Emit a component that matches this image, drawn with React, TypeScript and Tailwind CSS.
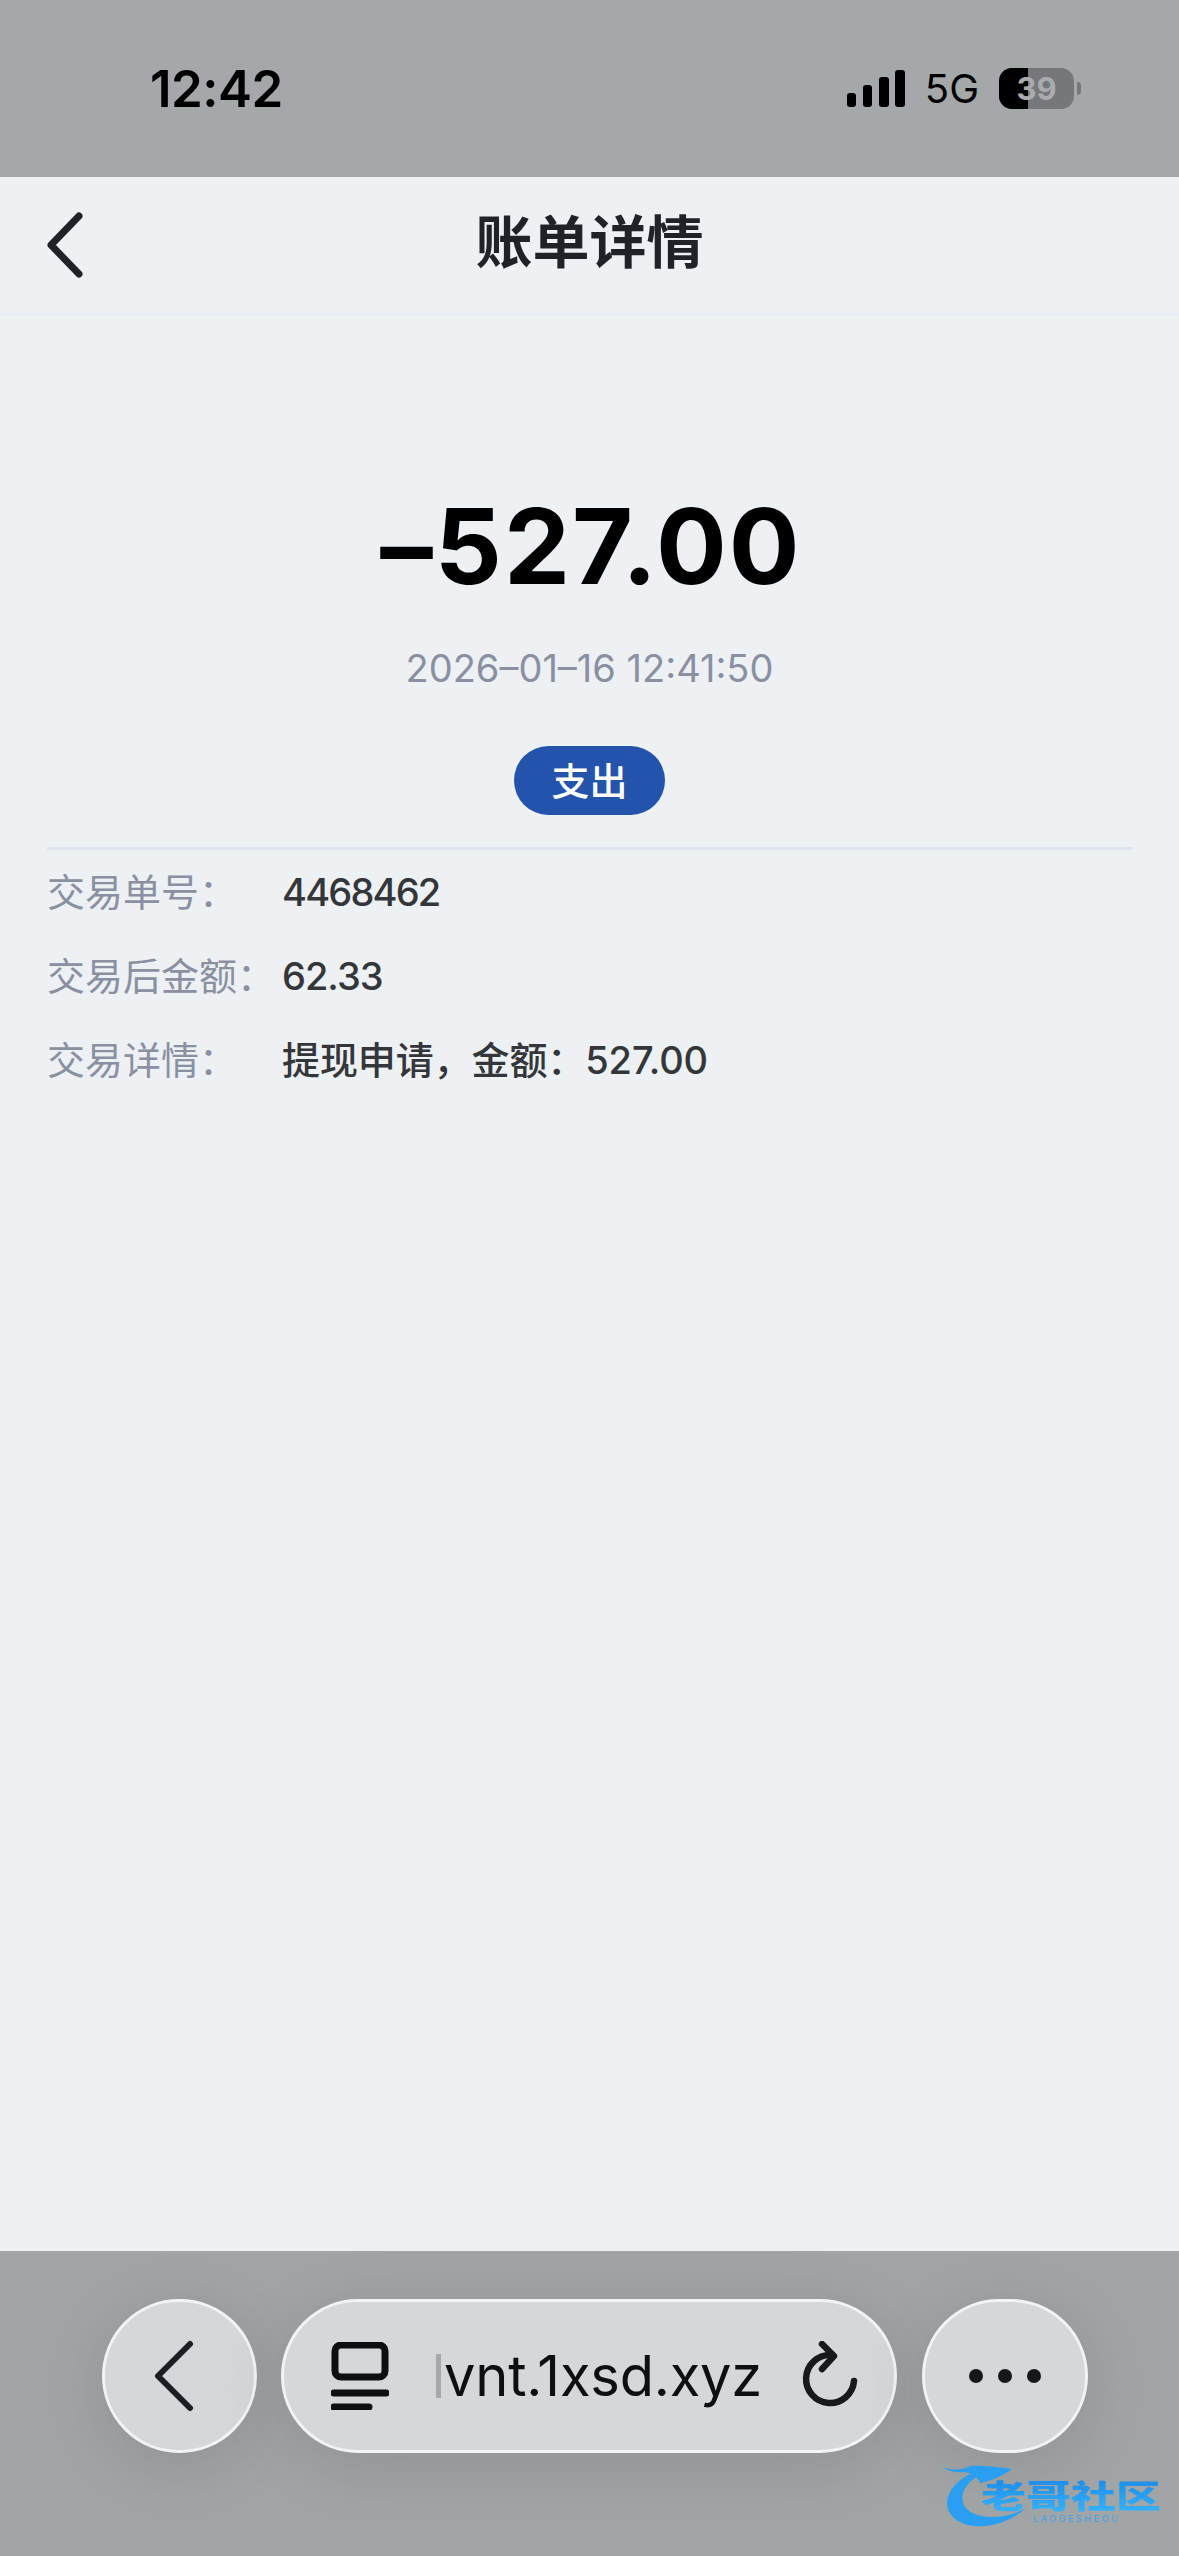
import React from "react";

const FONT = { fontFamily: 'Inter, "Noto Sans CJK SC", sans-serif' };

function Row({ label, value, tracking }: { label: string; value: string; tracking: string }) {
  return (
    <div className="flex h-[48px] items-center text-[38px] leading-[48px]">
      <div className="w-[235px] shrink-0 text-[#8a90a2]">{label}</div>
      <div className={`font-medium text-[#34363a] ${tracking}`}>{value}</div>
    </div>
  );
}

export default function App() {
  return (
    <div className="relative flex h-[2556px] w-[1179px] flex-col overflow-hidden bg-[#edf1f4]" style={FONT}>
      {/* status bar */}
      <div className="flex h-[177px] shrink-0 items-center justify-between bg-[#a5a8a9] pl-[150px] pr-[98px]">
        <div className="text-[51px] font-semibold leading-none tracking-[-0.5px] text-black">12:42</div>
        <div className="flex items-center">
          <svg width="58" height="37" viewBox="0 0 58 37" fill="#000">
            <rect x="0" y="23" width="9" height="14" rx="3" />
            <rect x="16" y="15" width="9" height="22" rx="3" />
            <rect x="32" y="7" width="10" height="30" rx="3" />
            <rect x="48" y="0" width="10" height="37" rx="3" />
          </svg>
          <div className="ml-[20px] text-[40px] font-normal leading-none text-black">5G</div>
          <div className="relative ml-[20px] flex h-[41px] w-[75px] items-center justify-center overflow-hidden rounded-[13px] bg-[#767779]">
            <div className="absolute inset-y-0 left-0 w-[29px] bg-black" />
            <div className="relative text-[31px] font-bold leading-none text-[#a9abac]">39</div>
          </div>
          <div className="ml-[3px] h-[13px] w-[4px] rounded-r-full bg-[#767779]" />
        </div>
      </div>

      {/* header */}
      <div className="relative flex h-[139px] shrink-0 items-center justify-center border-b-[3px] border-[#e8edf6] pb-[5px]">
        <svg className="absolute left-[44px] top-[35px]" width="40" height="66" viewBox="0 0 40 66" fill="none" stroke="#1f2327" strokeWidth="7" strokeLinecap="round" strokeLinejoin="round">
          <path d="M35 4 L7 33 L35 62" />
        </svg>
        <div className="text-[57px] font-semibold leading-none text-[#1f2226]">账单详情</div>
      </div>

      {/* body */}
      <div className="flex flex-1 flex-col">
        <div className="mt-[177px] flex flex-col items-center">
          <div className="ml-[3px] text-[105px] font-bold leading-[105px] tracking-[2px] text-black">–527.00</div>
          <div className="mt-[46px] text-[38px] leading-[48px] text-[#8a90a2]">2026–01–16 12:41:50</div>
          <div className="mt-[54px] flex h-[69px] w-[151px] items-center justify-center rounded-full bg-[#2353ab] text-[38px] font-medium leading-none text-white">
            支出
          </div>
        </div>
        <div className="mx-[47px] mt-[32px] border-t-[3px] border-[#dfe4f2] pt-[18px]">
          <div className="flex flex-col gap-[36px]">
            <Row label="交易单号：" value="4468462" tracking="tracking-[-1.8px]" />
            <Row label="交易后金额：" value="62.33" tracking="tracking-[-1px]" />
            <Row label="交易详情：" value="提现申请，金额：527.00" tracking="tracking-[-0.1px]" />
          </div>
        </div>
      </div>

      {/* browser toolbar */}
      <div className="flex h-[305px] shrink-0 items-start bg-[#a2a5a6] pl-[102px] pt-[48px]">
        <div className="flex h-[154px] w-[155px] items-center justify-center rounded-full border-[3px] border-[#f2f3f4] bg-[#d5d8db] pr-[11px] shadow-[0_12px_70px_rgba(0,0,0,0.12)]">
          <svg width="44" height="72" viewBox="0 0 44 72" fill="none" stroke="#1b1e22" strokeWidth="6" strokeLinecap="round" strokeLinejoin="round">
            <path d="M38 4 L6 36 L38 68" />
          </svg>
        </div>
        <div className="ml-[24px] flex h-[154px] w-[616px] items-center rounded-[77px] border-[3px] border-[#f2f3f4] bg-[#d5d8db] pl-[47px] shadow-[0_12px_70px_rgba(0,0,0,0.12)]">
          <svg width="58" height="68" viewBox="0 0 58 68" fill="none" stroke="#0d0f12" strokeWidth="7" strokeLinecap="round" strokeLinejoin="round" className="shrink-0">
            <rect x="4" y="3" width="50" height="32" rx="6" />
            <path d="M3 51 H55" />
            <path d="M3 65 H38" />
          </svg>
          <div className="ml-[47px] h-[44px] w-[5px] shrink-0 bg-[#a6a9ac]" />
          <div className="ml-[3px] text-[56px] font-normal leading-none tracking-[-0.2px] text-[#0d0f12]">vnt.1xsd.xyz</div>
          <svg width="56" height="70" viewBox="0 0 56 70" fill="none" stroke="#17191c" strokeWidth="6.5" strokeLinecap="round" strokeLinejoin="round" className="ml-[40px] shrink-0">
            <path d="M29 14 A24 24 0 1 0 52 40" />
            <path d="M20 3 L32 15 L20 28" />
          </svg>
        </div>
        <div className="ml-[25px] flex h-[154px] w-[166px] items-center justify-center gap-[15px] rounded-full border-[3px] border-[#f2f3f4] bg-[#d5d8db] shadow-[0_12px_70px_rgba(0,0,0,0.12)]">
          <div className="h-[14px] w-[14px] rounded-full bg-[#15181b]" />
          <div className="h-[14px] w-[14px] rounded-full bg-[#15181b]" />
          <div className="h-[14px] w-[14px] rounded-full bg-[#15181b]" />
        </div>
      </div>

      {/* watermark */}
      <div className="absolute left-[942px] top-[2462px] h-[68px] w-[222px]">
        <svg className="absolute left-0 top-0" width="120" height="68" viewBox="0 0 120 68" fill="none">
          <path d="M28 12 C8 22 -3 42 12 56 C28 70 62 66 84 46 C64 58 34 58 24 46 C16 36 22 22 36 14 Z" fill="#2a9ff2" />
          <path d="M0 5 C12 9 22 8 28 4 C40 3 56 5 70 7 C62 13 52 18 38 21 C36 15 30 11 22 10 C14 11 6 9 0 5 Z" fill="#2a9ff2" />
        </svg>
        <div className="absolute left-[39px] top-[18px] origin-top-left scale-y-[0.72] whitespace-nowrap bg-gradient-to-b from-[#1f8de8] to-[#35b2fb] bg-clip-text text-[45px] font-black leading-[45px] text-transparent">
          老哥社区
        </div>
        <div className="absolute left-[91px] top-[52px] whitespace-nowrap text-[9px] leading-[10px] tracking-[2.6px] text-[#3aa3ea]">
          LAOGESHEOU
        </div>
      </div>
    </div>
  );
}
